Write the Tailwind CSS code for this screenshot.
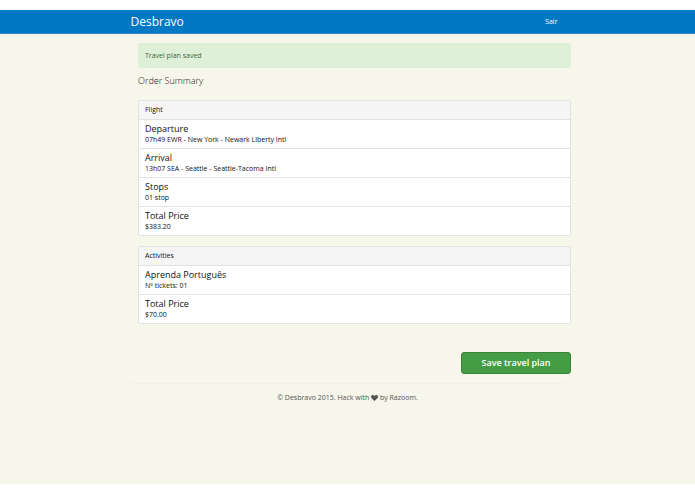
<!DOCTYPE html>
<html lang="en">

<head>
    <meta charset="UTF-8">
    <meta name="viewport" content="width=device-width, initial-scale=1.0">
    <title>Desbravo - Order Summary</title>
    <script src="https://cdn.jsdelivr.net/npm/@tailwindcss/browser@4"></script>
</head>

<body class="bg-white py-[10px] min-h-screen flex flex-col font-['Open_Sans',sans-serif] text-[7px] leading-[10px] text-[#111]">
    <div class="grow bg-[#f7f6ea]">
        <!-- Navbar -->
        <nav class="bg-[#0079c5] border-b border-[#2b87c0] text-white">
            <div class="max-w-[434px] mx-auto h-[23px] flex items-center justify-between pr-[7px]">
                <a href="#" class="text-[12px] leading-[16px]">Desbravo</a>
                <a href="#" class="font-medium">Sair</a>
            </div>
        </nav>

        <!-- Content -->
        <main class="max-w-[447px] mx-auto pl-[14px] pt-[9px]">
            <div role="alert" class="bg-[#dff0d8] rounded-xs px-[7px] pt-[8px] pb-[7px] text-[#3c663d]">Travel plan saved</div>

            <h1 class="mt-[7px] text-[9px] leading-[12px] font-light">Order Summary</h1>

            <section class="mt-[13px] bg-white border border-[#e2e2de] rounded-xs">
                <h2 class="bg-[#f5f5f5] px-[6px] py-[4px]">Flight</h2>
                <ul>
                    <li class="border-t border-[#e2e2e2] px-[6px] py-[3px]">
                        <h3 class="text-[9px] leading-[12px]">Departure</h3>
                        <p>07h49 EWR - New York - Newark Liberty Intl</p>
                    </li>
                    <li class="border-t border-[#e2e2e2] px-[6px] py-[3px]">
                        <h3 class="text-[9px] leading-[12px]">Arrival</h3>
                        <p>13h07 SEA - Seattle - Seattle-Tacoma Intl</p>
                    </li>
                    <li class="border-t border-[#e2e2e2] px-[6px] py-[3px]">
                        <h3 class="text-[9px] leading-[12px]">Stops</h3>
                        <p>01 stop</p>
                    </li>
                    <li class="border-t border-[#e2e2e2] px-[6px] py-[3px]">
                        <h3 class="text-[9px] leading-[12px]">Total Price</h3>
                        <p>$383.20</p>
                    </li>
                </ul>
            </section>

            <section class="mt-[10px] bg-white border border-[#e2e2de] rounded-xs">
                <h2 class="bg-[#f5f5f5] px-[6px] py-[4px]">Activities</h2>
                <ul>
                    <li class="border-t border-[#e2e2e2] px-[6px] py-[3px]">
                        <h3 class="text-[9px] leading-[12px]">Aprenda Português</h3>
                        <p>Nº tickets: 01</p>
                    </li>
                    <li class="border-t border-[#e2e2e2] px-[6px] py-[3px]">
                        <h3 class="text-[9px] leading-[12px]">Total Price</h3>
                        <p>$70.00</p>
                    </li>
                </ul>
            </section>

            <div class="mt-[28px] flex justify-end">
                <button type="button" class="w-[110px] py-[4px] bg-[#449d44] border border-[#398439] rounded-[3px] text-white text-[9px] leading-[12px] font-semibold">Save travel plan</button>
            </div>
        </main>

        <!-- Footer -->
        <footer class="max-w-[434px] mx-auto mt-[9px] pt-[9px] border-t border-[#f0f0ea] text-center text-[#555]">
            © Desbravo 2015. Hack with
            <svg class="inline w-[7px] h-[6px] align-middle" viewBox="0 0 14 12" fill="currentColor" role="img" aria-label="love"><path d="M7 12 1.2 6.4C-.5 4.600-.3 2 1.200.8 3-.6 5.800-.1 7 2 8.200-.1 11-.6 12.800.8c1.500 1.200 1.700 3.800 0 5.600z"/></svg>
            by Razoom.
        </footer>
    </div>
</body>

</html>
